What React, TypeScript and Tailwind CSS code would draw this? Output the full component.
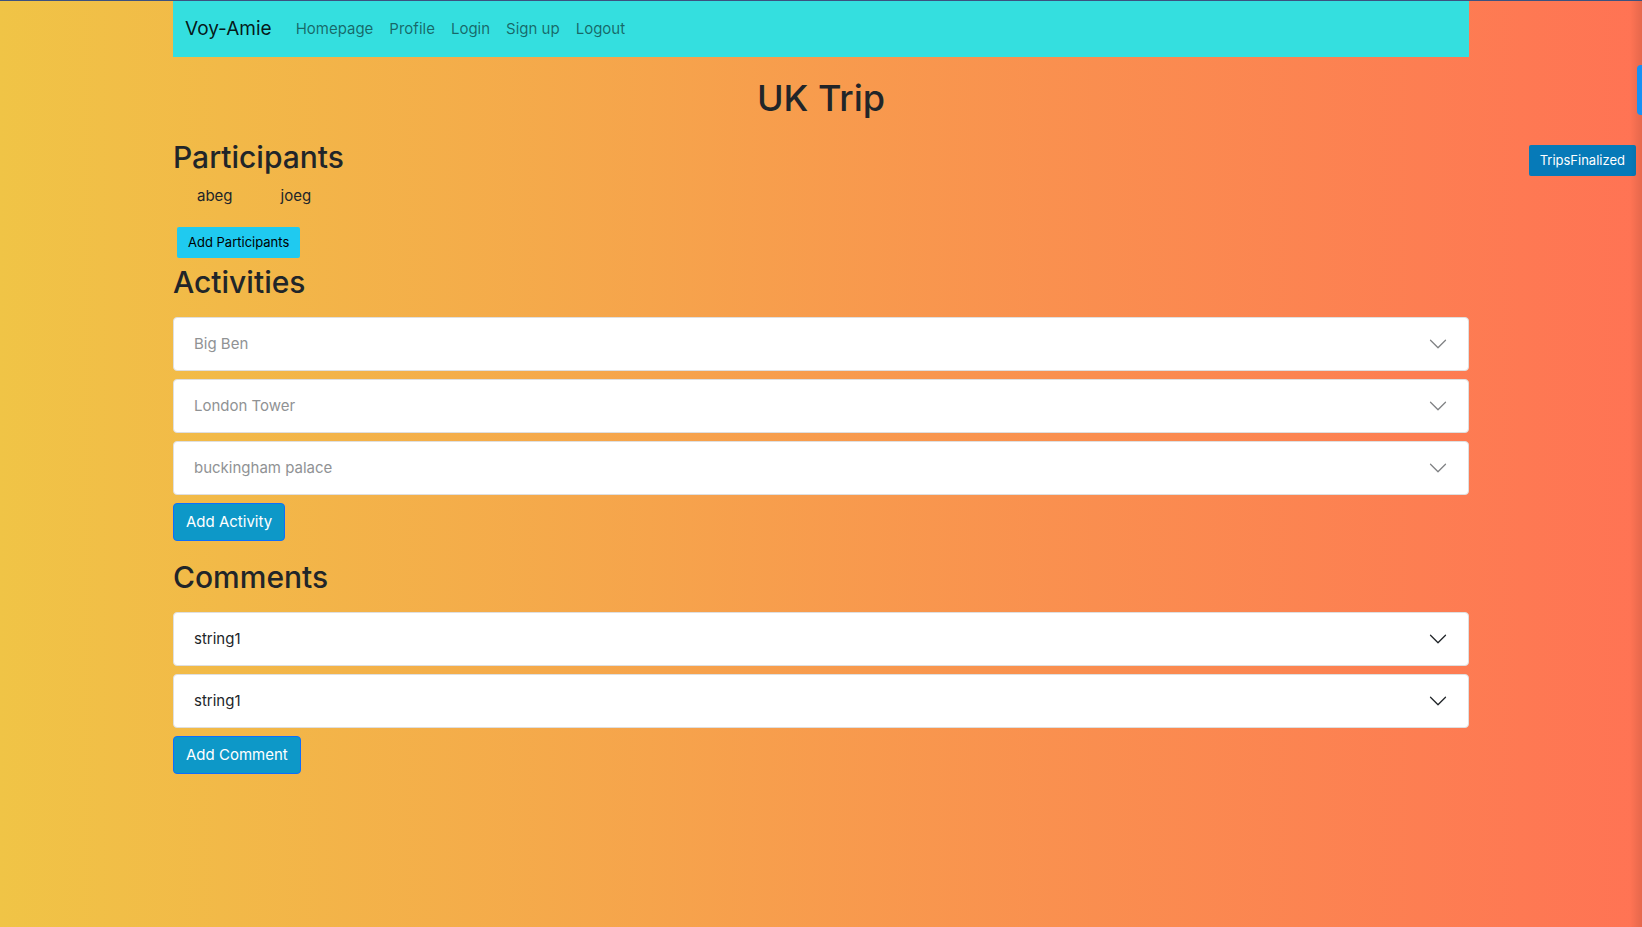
const navLinks = ["Homepage", "Profile", "Login", "Sign up", "Logout"];
const participants = ["abeg", "joeg"];
const activities = ["Big Ben", "London Tower", "buckingham palace"];
const comments = ["string1", "string1"];

function Chevron() {
  return (
    <svg viewBox="0 0 16 16" className="size-5 shrink-0" fill="currentColor" aria-hidden="true">
      <path
        fillRule="evenodd"
        d="M1.646 4.646a.5.5 0 0 1 .708 0L8 10.293l5.646-5.647a.5.5 0 0 1 .708.708l-6 6a.5.5 0 0 1-.708 0l-6-6a.5.5 0 0 1 0-.708z"
      />
    </svg>
  );
}

function Panel({ label, muted = false }: { label: string; muted?: boolean }) {
  return (
    <button
      type="button"
      aria-expanded="false"
      className="flex w-full items-center justify-between rounded border border-[#dfdfdf] bg-white px-5 py-3.5 text-left text-[15px] leading-6 text-[#212529]"
    >
      <span className={muted ? "text-[#909294]" : ""}>{label}</span>
      <span className={muted ? "text-[#808284]" : ""}>
        <Chevron />
      </span>
    </button>
  );
}

function AddButton({ label }: { label: string }) {
  return (
    <button
      type="button"
      className="self-start rounded border border-[#0d6efd] bg-[#0d98c8] px-3 py-1.5 text-[15px] leading-6 text-white"
    >
      {label}
    </button>
  );
}

export default function App() {
  return (
    <div className="relative min-h-screen overflow-hidden border-t border-[#3c5280] bg-linear-to-r/srgb from-[#f0c446] to-[#ff7354] font-['Inter',sans-serif] text-[15px] leading-6 text-[#212529]">
      <div className="grid grid-cols-[1fr_minmax(0,1296px)_1fr]">
        <div className="col-start-2">
          <nav className="flex h-14 items-center bg-[#34dfdf] px-3">
            <a href="#" className="mr-4 text-[19px] leading-8 text-black/90">
              Voy-Amie
            </a>
            <ul className="flex">
              {navLinks.map((link) => (
                <li key={link}>
                  <a href="#" className="block p-2 text-black/55">
                    {link}
                  </a>
                </li>
              ))}
            </ul>
          </nav>

          <main>
            <h1 className="mt-4 text-center text-4xl leading-[50px] font-medium">UK Trip</h1>

            <section className="mt-3.5">
              <h2 className="text-[30px] leading-10 font-medium">Participants</h2>
              <ul className="mt-[7px] flex gap-12 px-6">
                {participants.map((name) => (
                  <li key={name}>{name}</li>
                ))}
              </ul>
              <button
                type="button"
                className="mt-[19px] ml-1 block rounded-xs bg-[#1fcaf0] px-[11px] py-[5px] text-[13px] leading-[21px] text-black"
              >
                Add Participants
              </button>
            </section>

            <section className="mt-1 flex flex-col gap-2">
              <h2 className="mb-[7px] text-[30px] leading-10 font-medium">Activities</h2>
              {activities.map((name) => (
                <Panel key={name} label={name} muted />
              ))}
              <AddButton label="Add Activity" />
            </section>

            <section className="mt-4 flex flex-col gap-2">
              <h2 className="mb-[7px] text-[30px] leading-10 font-medium">Comments</h2>
              {comments.map((text, index) => (
                <Panel key={index} label={text} />
              ))}
              <AddButton label="Add Comment" />
            </section>
          </main>
        </div>

        <aside className="pt-36 pr-1.5 text-right">
          <button
            type="button"
            className="rounded-xs bg-[#067ab8] px-[11px] py-[5px] text-[13px] leading-[21px] text-white"
          >
            TripsFinalized
          </button>
        </aside>
      </div>

      <div className="absolute inset-y-0 right-0 w-3 bg-linear-to-r from-transparent to-black/10" />
      <button
        type="button"
        aria-label="Open side panel"
        className="absolute top-16 right-0 h-[50px] w-[5px] rounded-l bg-[#1690f5]"
      />
    </div>
  );
}
